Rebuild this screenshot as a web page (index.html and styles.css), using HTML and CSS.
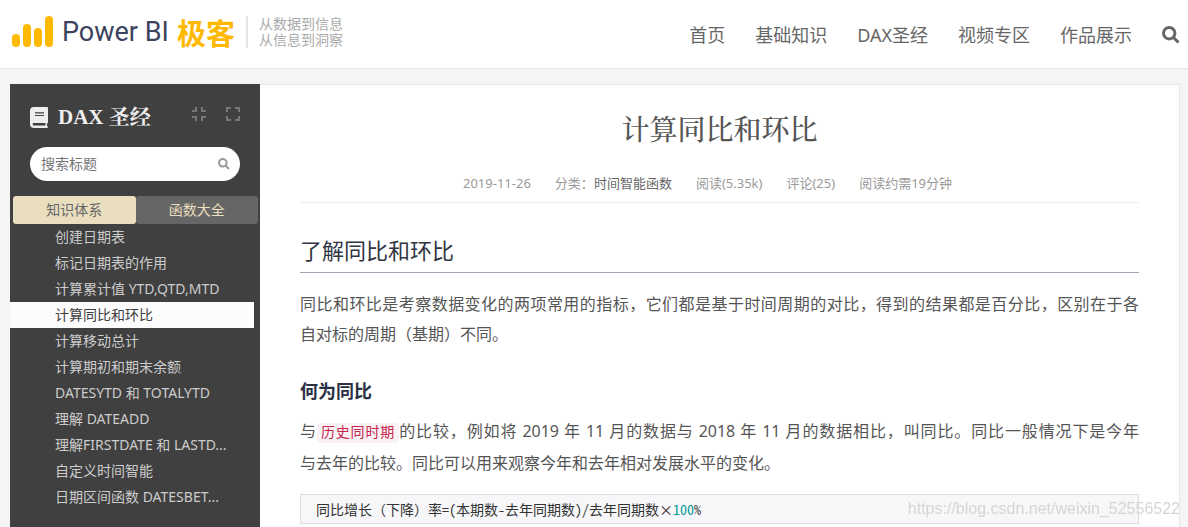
FILE: index.html
```html
<!DOCTYPE html>
<html lang="zh-CN">
<head>
<meta charset="utf-8">
<meta name="viewport" content="width=device-width, initial-scale=1">
<title>计算同比和环比 - Power BI 极客</title>
<link rel="stylesheet" href="styles.css">
</head>
<body>
<header class="header">
  <a class="logo" href="#">
    <svg class="logo-mark" viewBox="0 0 42 32" aria-hidden="true">
      <rect x="0" y="18" width="8" height="13" rx="4"/><rect x="11" y="8" width="8" height="23" rx="4"/><rect x="22" y="12" width="8" height="19" rx="4"/><rect x="33" y="0" width="8" height="31" rx="4"/>
    </svg>
    <span class="logo-name">Power BI</span>
    <span class="logo-geek">极客</span>
  </a>
  <p class="slogan">从数据到信息<br>从信息到洞察</p>
  <nav class="nav">
    <a href="#">首页</a>
    <a href="#">基础知识</a>
    <a href="#">DAX圣经</a>
    <a href="#">视频专区</a>
    <a href="#">作品展示</a>
    <button class="nav-search" type="button" aria-label="搜索">
      <svg viewBox="0 0 18 18" aria-hidden="true"><circle cx="7.2" cy="7.2" r="5.7"/><path d="M11.5 11.5L16.5 16.5"/></svg>
    </button>
  </nav>
</header>
<div class="layout">
  <aside class="sidebar">
    <div class="side-head">
      <svg class="book" viewBox="0 0 18 21" aria-hidden="true"><path fill="#eee" fill-rule="evenodd" d="M4 0H17Q18 0 18 1V15Q18 16 17 16.5V19Q18 19.3 18 20T17 21H4Q0 21 0 17V4Q0 0 4 0ZM5 5.3V6.4H14V5.3ZM5 8V9.1H14V8ZM4 16Q2.6 16 2.6 17.2T4 18.4H15.5V16Z"/></svg>
      <h2 class="side-title">DAX 圣经</h2>
      <button class="tool" type="button" aria-label="全部折叠"><svg viewBox="0 0 14 14" aria-hidden="true"><path d="M0 4H4V0M10 0V4H14M14 10H10V14M4 14V10H0"/></svg></button>
      <button class="tool" type="button" aria-label="全部展开"><svg viewBox="0 0 14 14" aria-hidden="true"><path d="M1 5V1H5M9 1H13V5M13 9V13H9M5 13H1V9"/></svg></button>
    </div>
    <form class="search">
      <input type="text" placeholder="搜索标题" aria-label="搜索标题">
      <button type="button" aria-label="搜索标题按钮"><svg viewBox="0 0 18 18" aria-hidden="true"><circle cx="7.2" cy="7.2" r="5.7"/><path d="M11.5 11.5L16.5 16.5"/></svg></button>
    </form>
    <div class="tabs">
      <button class="tab tab-active" type="button">知识体系</button>
      <button class="tab" type="button">函数大全</button>
    </div>
    <ul class="topics">
      <li><a href="#">创建日期表</a></li>
      <li><a href="#">标记日期表的作用</a></li>
      <li><a href="#">计算累计值 YTD,QTD,MTD</a></li>
      <li><a class="current" href="#">计算同比和环比</a></li>
      <li><a href="#">计算移动总计</a></li>
      <li><a href="#">计算期初和期末余额</a></li>
      <li><a href="#">DATESYTD 和 TOTALYTD</a></li>
      <li><a href="#">理解 DATEADD</a></li>
      <li><a href="#">理解FIRSTDATE 和 LASTD...</a></li>
      <li><a href="#">自定义时间智能</a></li>
      <li><a href="#">日期区间函数 DATESBET...</a></li>
    </ul>
  </aside>
  <main class="article">
    <h1 class="title">计算同比和环比</h1>
    <div class="meta">
      <span>2019-11-26</span>
      <span>分类：<a href="#">时间智能函数</a></span>
      <span>阅读(5.35k)</span>
      <span>评论(25)</span>
      <span>阅读约需19分钟</span>
    </div>
    <h2 class="section">了解同比和环比</h2>
    <p class="text"><span class="full-line">同比和环比是考察数据变化的两项常用的指标，它们都是基于时间周期的对比，得到的结果都是百分比，区别在于各</span>自对标的周期（基期）不同。</p>
    <h3 class="subsection">何为同比</h3>
    <p class="text text-loose"><span class="full-line">与<code class="term">历史同时期</code>的比较，例如将 2019 年 11 月的数据与 2018 年 11 月的数据相比，叫同比。同比一般情况下是今年</span>与去年的比较。同比可以用来观察今年和去年相对发展水平的变化。</p>
    <pre class="formula"><code>同比增长（下降）率=(本期数-去年同期数)/去年同期数×<span class="number">100</span>%</code></pre>
  </main>
</div>
<div class="watermark">https://blog.csdn.net/weixin_52556522</div>
</body>
</html>
```
FILE: styles.css
```css
* { box-sizing: border-box; }
body {
  margin: 0;
  min-height: 100vh;
  display: flex;
  flex-direction: column;
  background: #f5f5f5;
  color: #555;
  font-family: "Noto Sans", "Noto Sans CJK SC", sans-serif;
}
h1, h2, h3, p, ul, pre { margin: 0; }
a { color: inherit; text-decoration: none; }
button { padding: 0; border: 0; background: none; font: inherit; color: inherit; }
svg { display: block; }

.header {
  display: flex;
  align-items: center;
  height: 69px;
  padding: 0 8px 4px 12px;
  background: #fff;
  border-bottom: 1px solid #e6e6e6;
}
.logo { display: flex; align-items: center; }
.logo-mark { width: 42px; height: 32px; margin-right: 8px; fill: #ffb900; }
.logo-name { font: 27px/40px Roboto, "Liberation Sans", sans-serif; color: #3c4460; white-space: nowrap; }
.logo-geek { margin-left: 8px; font: 700 29px/36px "Noto Sans CJK SC", sans-serif; color: #ffb900; white-space: nowrap; }
.slogan {
  margin-left: 11px;
  padding-left: 11px;
  border-left: 2px solid #e5e5e5;
  font-size: 14px;
  line-height: 16px;
  color: #aaa;
  white-space: nowrap;
}
.nav {
  display: flex;
  align-items: center;
  gap: 30px;
  margin-left: auto;
  padding-top: 6px;
  font-size: 18px;
  line-height: 28px;
  color: #666;
  white-space: nowrap;
}
.nav-search svg { width: 18px; height: 18px; }
.nav-search circle, .nav-search path, .search circle, .search path { fill: none; stroke: currentColor; stroke-width: 3; }

.layout { flex: 1; display: flex; padding: 15px 8px 0 10px; }
.sidebar { flex: none; width: 250px; background: #404040; color: #ccc; }
.side-head { display: flex; align-items: center; padding: 19px 20px 0 20px; }
.book { width: 18px; height: 21px; margin-right: 10px; }
.side-title {
  margin-right: auto;
  font: 700 21px/28px "Liberation Serif", "Noto Serif CJK SC", "Noto Sans CJK SC", serif;
  color: #eee;
}
.tool { margin-left: 20px; padding-bottom: 6px; color: #777; }
.tool svg { width: 14px; height: 14px; fill: none; stroke: currentColor; stroke-width: 2; }
.search {
  display: flex;
  align-items: center;
  height: 34px;
  margin: 16px 20px 0;
  padding: 0 10px 0 11px;
  border-radius: 17px;
  background: #fff;
}
.search input {
  flex: 1;
  min-width: 0;
  padding: 0;
  border: 0;
  outline: 0;
  background: none;
  font: 14px/20px "Noto Sans", "Noto Sans CJK SC", sans-serif;
}
.search input::placeholder { color: #757575; }
.search button { color: #999; }
.search svg { width: 12px; height: 12px; }
.tabs { display: flex; margin: 15px 2px 0 3px; }
.tab { flex: 1; height: 28px; border-radius: 3px; background: #666; color: #e9dfbf; font-size: 14px; line-height: 28px; }
.tab-active { background: #e9dfbf; color: #666; }
.topics { padding: 0 6px 0 0; list-style: none; font-size: 14px; line-height: 26px; }
.topics a { display: block; padding-left: 45px; overflow: hidden; white-space: nowrap; }
.topics .current { background: #fcfcfc; color: #404040; }

.article {
  flex: 1;
  min-width: 0;
  padding: 23px 40px 0;
  background: #fff;
  border: 1px solid #e6e6e6;
  border-width: 1px 1px 0 0;
}
.title { font: 500 28px/40px "Noto Serif CJK SC", "Noto Sans CJK SC", serif; text-align: center; }
.meta {
  display: flex;
  justify-content: center;
  padding: 25px 0 9px;
  border-bottom: 1px solid #eee;
  font-size: 13px;
  line-height: 20px;
  color: #999;
  white-space: nowrap;
}
.meta span { margin-right: 24px; }
.meta a { color: #666; }
.section {
  margin-top: 31px;
  padding-bottom: 5px;
  border-bottom: 1px solid #a3a3b5;
  font-size: 22px;
  font-weight: 400;
  line-height: 33px;
  color: #2f3542;
}
.text { margin-top: 16px; font-size: 16px; line-height: 30px; }
.full-line { display: block; text-align: justify; text-align-last: justify; }
.subsection { margin-top: 28px; font-size: 18px; line-height: 28px; color: #2b3044; }
.text-loose { margin-top: 10px; line-height: 32px; }
.term {
  padding: 2px 4px;
  border-radius: 4px;
  background: #f9f2f4;
  color: #c7254e;
  font: 14px/16px "Liberation Mono", "Noto Sans CJK SC", monospace;
}
.formula {
  margin-top: 15px;
  padding: 3px 15px;
  border: 1px solid #ddd;
  background: #f7f7f9;
  color: #333;
  font: 14px/22px "Noto Sans Mono CJK SC", "Liberation Mono", "Noto Sans CJK SC", monospace;
}
.formula code { font: inherit; }
.number { color: #099; }
.watermark {
  position: fixed;
  right: 8px;
  bottom: 8px;
  font: 16px/20px "Liberation Sans", sans-serif;
  color: #d5d5d7;
  pointer-events: none;
}
```
